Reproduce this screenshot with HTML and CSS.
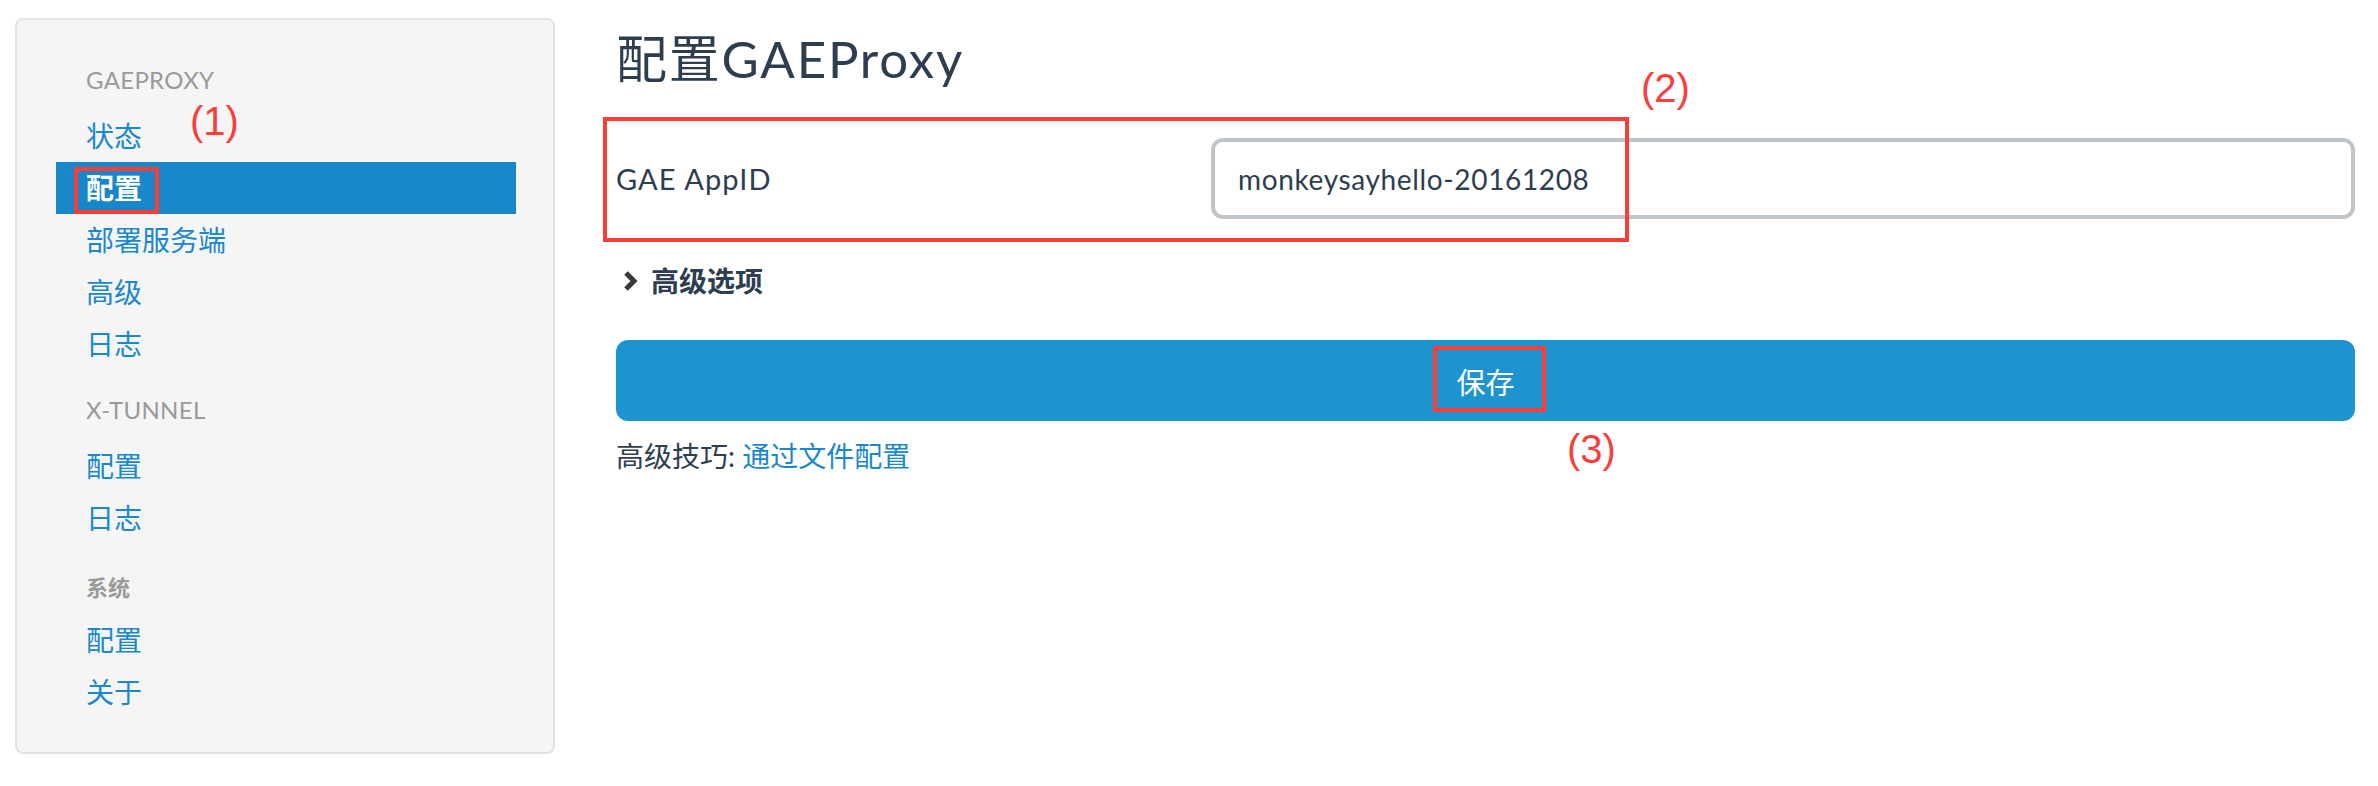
FILE: index.html
```html
<!DOCTYPE html>
<html lang="zh-CN">
<head>
<meta charset="utf-8">
<title>配置GAEProxy</title>
<link rel="stylesheet" href="styles.css">
</head>
<body>
<div class="page">
  <aside class="sidebar">
    <ul class="nav">
      <li class="nav-header">GAEPROXY</li>
      <li class="nav-item"><a href="#">状态</a><span class="note note-1">(1)</span></li>
      <li class="nav-item active"><a href="#">配置</a><span class="mark mark-1"></span></li>
      <li class="nav-item"><a href="#">部署服务端</a></li>
      <li class="nav-item"><a href="#">高级</a></li>
      <li class="nav-item"><a href="#">日志</a></li>
      <li class="nav-header spaced">X-TUNNEL</li>
      <li class="nav-item"><a href="#">配置</a></li>
      <li class="nav-item"><a href="#">日志</a></li>
      <li class="nav-header spaced cjk">系统</li>
      <li class="nav-item"><a href="#">配置</a></li>
      <li class="nav-item"><a href="#">关于</a></li>
    </ul>
  </aside>
  <main class="main">
    <h1 class="title">配置GAEProxy</h1>
    <div class="form-row">
      <label class="form-label" for="appid">GAE AppID</label>
      <input class="form-input" id="appid" type="text" value="monkeysayhello-20161208">
    </div>
    <div class="adv">
      <svg class="chev" width="17" height="22" viewBox="0 0 17 22"><polyline points="4,3 12,11 4,19" fill="none" stroke="#383838" stroke-width="5" stroke-linejoin="miter"/></svg>
      <span>高级选项</span>
    </div>
    <button class="save" type="button">保存</button>
    <p class="tip">高级技巧: <a href="#">通过文件配置</a></p>

    <span class="mark mark-2"></span>
    <span class="note note-2">(2)</span>
    <span class="mark mark-3"></span>
    <span class="note note-3">(3)</span>
  </main>
</div>
</body>
</html>
```
FILE: styles.css
```css
* { box-sizing: border-box; }

html, body {
  margin: 0;
  padding: 0;
  background: #ffffff;
}

body {
  font-family: Lato, "Noto Sans CJK SC", sans-serif;
  color: #2c3e50;
}

.page {
  display: flex;
  align-items: flex-start;
  gap: 61px;
  padding: 18px 23px 0 15px;
}

/* Sidebar */
.sidebar {
  flex: 0 0 540px;
  background: #f5f5f5;
  border: 2px solid #e3e3e3;
  border-radius: 8px;
  padding: 38px 37px 34px 39px;
}

.nav {
  list-style: none;
  margin: 0;
  padding: 0;
}

.nav-header {
  padding: 2px 30px 10px;
  line-height: 40px;
  font-size: 24px;
  font-weight: 400;
  letter-spacing: 0.3px;
  color: #9a9a9a;
  text-transform: uppercase;
}

.nav-header.cjk {
  padding: 6px 30px;
  font-size: 22px;
  font-weight: 700;
  letter-spacing: 0;
}

.nav-header.spaced {
  margin-top: 18px;
}

.nav-item {
  position: relative;
}

.nav-item a {
  display: block;
  padding: 6px 30px;
  line-height: 40px;
  font-size: 28px;
  color: #1a88cc;
  text-decoration: none;
}

.nav-item.active a {
  background: #1787c9;
  color: #ffffff;
  font-weight: 700;
}

/* Main */
.main {
  flex: 1;
  position: relative;
}

.title {
  margin: 11px 0 0;
  font-size: 51px;
  line-height: 60px;
  font-weight: 400;
  letter-spacing: 1.8px;
  color: #2c3e50;
}

.form-row {
  display: flex;
  align-items: center;
  margin-top: 49px;
}

.form-label {
  flex: 0 0 595px;
  font-size: 29px;
  letter-spacing: 1.1px;
  color: #2c3e50;
}

.form-input {
  flex: 1;
  height: 81px;
  border: 4px solid #bfc4c8;
  border-radius: 12px;
  padding: 0 20px 0 23px;
  font-family: Lato, "Noto Sans CJK SC", sans-serif;
  font-size: 28px;
  letter-spacing: 0.65px;
  color: #2c3e50;
  background: #ffffff;
  outline: none;
}

.adv {
  display: flex;
  align-items: center;
  gap: 12px;
  margin-top: 42px;
  padding-left: 6px;
  line-height: 40px;
  font-size: 28px;
  font-weight: 700;
  color: #2c3e50;
}

.chev {
  display: block;
}

.save {
  display: block;
  width: 100%;
  height: 81px;
  margin-top: 39px;
  border: none;
  border-radius: 12px;
  background: #1d93d0;
  color: #ffffff;
  font-family: Lato, "Noto Sans CJK SC", sans-serif;
  font-size: 29px;
}

.tip {
  margin: 15px 0 0;
  line-height: 40px;
  font-size: 28px;
  color: #2c3e50;
}

.tip a {
  color: #1a88cc;
  text-decoration: none;
}

/* Annotations */
.mark {
  position: absolute;
  border: 4px solid #f93e3a;
  pointer-events: none;
}

.note {
  position: absolute;
  font-family: "Liberation Sans", sans-serif;
  font-size: 40px;
  line-height: 40px;
  color: #f93e3a;
  white-space: nowrap;
}

.mark-1 { left: 18px; top: 5px; width: 85px; height: 47px; }
.note-1 { left: 134px; top: -9px; }

.mark-2 { left: -13px; top: 99px; width: 1026px; height: 125px; }
.note-2 { left: 1025px; top: 50px; }

.mark-3 { left: 817px; top: 328px; width: 113px; height: 66px; }
.note-3 { left: 951px; top: 411px; }
```
